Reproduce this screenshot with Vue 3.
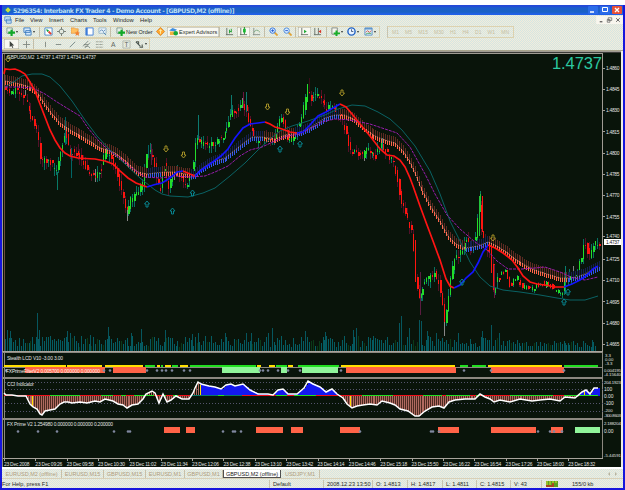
<script setup>
const menus = [
  { label: "File", w: 15 },
  { label: "View", w: 19 },
  { label: "Insert", w: 21 },
  { label: "Charts", w: 23 },
  { label: "Tools", w: 20 },
  { label: "Window", w: 27 },
  { label: "Help", w: 20 },
];

const tools = [
  { icon: "new", w: 17, drop: true },
  { icon: "windows", w: 18, drop: true },
  { sep: true, w: 3 },
  { icon: "market", w: 13 },
  { icon: "cross", w: 14 },
  { icon: "navigator", w: 14 },
  { icon: "terminal", w: 13 },
  { icon: "tester", w: 14 },
  { sep: true, w: 4 },
  { icon: "new", w: 40, label: "New Order" },
  { icon: "meta", w: 13 },
  { icon: "expert", w: 52, label: "Expert Advisors", on: true },
  { sep: true, w: 4 },
  { icon: "bars", w: 14 },
  { icon: "candles", w: 13, on: true },
  { icon: "line", w: 14 },
  { sep: true, w: 3 },
  { icon: "zoomin", w: 14 },
  { icon: "zoomout", w: 14 },
  { sep: true, w: 3 },
  { icon: "scroll", w: 13, on: true },
  { icon: "shift", w: 15 },
  { sep: true, w: 3 },
  { icon: "indicator", w: 16, drop: true },
  { icon: "clock", w: 17, drop: true },
  { icon: "template", w: 17, drop: true },
];
const periods = ["M1", "M5", "M15", "M30", "H1", "H4", "D1", "W1", "MN"];
const drawTools = [
  { icon: "cursor", w: 15, on: true },
  { icon: "crosshair", w: 14 },
  { sep: true, w: 5 },
  { icon: "vline", w: 13 },
  { icon: "hline", w: 14 },
  { icon: "trend", w: 14 },
  { icon: "channel", w: 13 },
  { icon: "fibo", w: 14 },
  { icon: "letter", w: 13 },
  { icon: "textbox", w: 13 },
  { icon: "arrows", w: 17, drop: true },
];

const tabs = [
  { label: "EURUSD,M2 (offline)", w: 60 },
  { label: "EURUSD,M15", w: 42 },
  { label: "GBPUSD,M15", w: 42 },
  { label: "EURUSD,M1", w: 39 },
  { label: "GBPUSD,M1", w: 38 },
  { label: "GBPUSD,M2 (offline)", w: 58, on: true },
  { label: "USDJPY,M1", w: 39 },
];
const cells = [
  { label: "For Help, press F1", w: 268 },
  { label: "Default", w: 54 },
  { label: "2008.12.23 13:50", w: 49 },
  { label: "O: 1.4813", w: 35 },
  { label: "H: 1.4817", w: 35 },
  { label: "L: 1.4811", w: 34 },
  { label: "C: 1.4815", w: 34 },
  { label: "V: 43", w: 31 },
];

// small deterministic generator, so the bars are the same on every load
let seed = 11;
const rnd = () => {
  seed = (seed * 16807) % 2147483647;
  return seed / 2147483647;
};

const parse = (s) => s.trim().split(/\s+/).map((p) => p.split(",").map(Number));
const at = (pts, x) => {
  for (let i = 1; i < pts.length; i++) {
    if (x <= pts[i][0]) {
      const [x0, y0] = pts[i - 1];
      const [x1, y1] = pts[i];
      return y0 + ((y1 - y0) * (x - x0)) / (x1 - x0 || 1);
    }
  }
  return pts[pts.length - 1][1];
};

const pricePath = parse(`5,90 12,92 20,91 26,98 30,112 35,127 38,130 41,160 45,160 50,162 57,172 60,155 64,140 66,128
  70,155 75,150 82,160 90,172 95,177 102,168 106,148 112,160 118,178 122,192 127,214 131,200 138,195 143,185 148,150
  153,155 158,185 161,190 164,160 168,190 173,172 178,170 183,180 188,183 193,170 197,138 201,143 208,145 216,143
  225,133 232,112 238,110 243,102 247,113 251,128 255,138 262,138 270,139 274,142 279,122 283,116 288,140 294,138
  299,128 303,112 308,88 312,100 315,92 320,97 326,108 333,108 340,112 345,128 350,148 355,153 362,156 368,150
  375,158 382,145 389,155 395,165 398,182 402,205 408,220 413,235 415,275 420,300 424,285 430,278 435,273 440,283
  443,305 445,325 448,305 450,280 455,260 462,250 467,240 472,252 477,235 480,202 482,230 486,248 491,250 494,290
  498,280 505,270 509,285 517,278 523,287 533,289 540,283 550,286 562,293 565,278 570,278 577,275 582,258 585,240
  590,258 594,245 598,242`);

const candles = [];
for (let x = 5; x < 599; x += 1.96) {
  const a = at(pricePath, x - 1) + (rnd() - 0.5) * 7;
  const b = at(pricePath, x + 1) + (rnd() - 0.5) * 7;
  const top = Math.min(a, b);
  const bottom = Math.max(a, b, top + 1.5);
  const calm = x > 498 && x < 560;
  const reach = calm ? 2 : 7;
  candles.push({
    x: Math.round(x),
    up: b < a,
    top,
    bottom,
    high: top - rnd() * reach,
    low: bottom + rnd() * reach,
    grey: rnd() > 0.95,
  });
}
const spikes = [
  [65, 117, 145, "#066"], [71, 148, 178, "#066"], [57, 172, 190, "#087a66"], [198, 115, 140, "#0c7a70"],
  [231, 95, 115, "#0c7a70"], [243, 92, 108, "#6a1440"], [246, 92, 112, "#0c7a70"], [309, 78, 92, "#3a0c18"],
  [127, 210, 221, "#888"], [148, 145, 158, "#066"], [480, 191, 210, "#0c7a60"], [420, 272, 315, "#5a1c40"],
  [444, 322, 336, "#888"], [382, 138, 152, "#0c7a70"], [494, 265, 298, "#6a1840"], [565, 266, 294, "#078070"],
  [151, 144, 165, "#5a1c40"], [491, 247, 273, "#ff1510"], [482, 196, 232, "#ff1510"], [479, 196, 236, "#22c53a"],
  [480, 194, 212, "#22c53a"], [66, 126, 138, "#ff1510"], [307, 84, 102, "#22dd2a"], [415, 240, 282, "#ff1510"],
];

const volPeaks = parse(`7,331 10,332 37,314 39,331 42,338 67,332 70,334 90,336 108,328 131,334 141,330 150,340
  165,331 192,335 198,334 225,334 246,334 251,334 268,334 272,329 305,332 325,333 353,331 356,329 399,324 401,317
  409,329 419,321 421,322 427,332 436,334 458,334 482,332 491,326 499,334 565,344 583,344 592,341`);
const volumes = [];
for (let x = 5; x < 596; x += 1.96) {
  const quiet = x > 500 ? 0.6 : 1;
  volumes.push({ x: Math.round(x), y: 351 - (4 + rnd() * 11 * quiet), dim: rnd() > 0.85 });
}

const fast = [
  ["#ff1414", "4,74 5,69 10,69.5 15,69 20,71 25,74 30,82 35,91 40,104 45,117 50,130 55,140 60,148 65,153 70,156 78,158 85,158.5 95,159 105,161 113,164 120,171 128,178 136,183 147,187"],
  ["#1414ff", "147,187 155,184.5 162,183 170,178 177,172 183,171"],
  ["#ff1414", "183,171 190,174 195,176"],
  ["#1414ff", "195,176 200,171 210,164 221,156 228,149 235,138 243,128 250,124 258,123 265,122"],
  ["#ff1414", "265,122 270,124 275,127 282,129 290,132 297,133"],
  ["#1414ff", "297,133 303,132 310,125 318,116 326,112 333,108 340,104"],
  ["#ff1414", "340,104 346,107 352,114 360,124 370,136 380,149 387,155 394,156 400,160 405,167 410,178 413,186 420,206 427,225 433,241 440,260 446,279 450,286 454,288"],
  ["#1414ff", "454,288 460,285 466,278 473,272 478,263 483,252 488,245"],
  ["#ff1414", "488,245 495,248 503,253 512,260 518,268 523,276 530,282 537,284 545,285 555,287 564,287"],
  ["#1414ff", "564,287 572,284 580,280 587,275 593,269 598,266"],
];
const slow = "5,87 10,84 15,81 22,76 32,74 42,74 50,77 60,86 72,101 85,120 97,136 110,150 125,164 140,178 155,190 162,194 170,196 188,197 203,193 215,188 230,176 245,163 258,150 270,139 280,131 292,126 308,121 325,115 338,109 352,105 365,106 378,112 390,119 402,130 415,146 430,171 440,194 450,221 460,241 470,262 480,277 490,286 503,290 520,292 540,295 557,298 570,300 585,300 598,296";
const dashed = "5,87 20,87 33,88 45,94 57,102 70,110 80,116 88,128 98,140 108,150 120,158 133,169 145,177 160,178 175,176 190,177 205,176 215,172 228,166 240,156 250,150 262,147 275,141 287,136 300,134 312,128 322,122 335,119 350,120 370,124 385,129 397,133 410,147 425,174 435,194 447,215 460,229 475,242 487,250 497,261 508,269 522,269 535,268 545,267 560,272 573,278 585,280 598,277";

const bandPath = parse(`5,81 12,82 20,84 30,87 37,92 45,104 52,114 60,123 67,128 77,134 90,141 100,148 108,150 115,153
  123,159 130,165 138,172 147,174 155,173 165,172 175,172 185,174 195,175 200,170 210,163 225,158 235,150 245,142
  252,137 262,137 275,139 285,135 297,133 308,129 316,124 325,118 335,115 345,115 355,120 365,129 375,136 385,140
  395,143 403,151 410,162 415,173 420,186 430,205 440,221 448,236 456,244 466,248 478,246 488,242 495,245 505,251
  515,259 525,265 535,270 547,274 560,278 568,278 577,277 585,274 598,267`);
const isBlue = (x) => (x > 147 && x < 160) || (x > 190 && x < 262) || (x > 295 && x < 340) || (x > 464 && x < 488) || x > 566;
const band = [];
for (let x = 5; x < 599; x += 1.96) {
  const y = at(bandPath, x);
  const blue = isBlue(x);
  band.push({ x: Math.round(x), y, bright: blue ? "#3557e8" : "#ff6347", dark: blue ? "#16204e" : "#5c2a22" });
}
const bandLine = bandPath.map((p) => p.join(",")).join(" ");

const signals = [
  [8, 59, 1], [166, 149, 1], [183.5, 155, 1], [267.5, 107, 1], [287.5, 112, 1], [342, 93, 1], [493, 238, 1],
  [147, 204, 0], [172.5, 211, 0], [192.5, 193, 0], [280, 149, 0], [300, 144, 0], [462, 282, 0], [564, 302, 0], [568, 292, 0],
];
const prices = Array.from({ length: 14 }, (_, i) => ({
  text: (1.486 - i * 0.0015).toFixed(4),
  y: 68 + i * 21.25 - (i === 8 ? 1.5 : 0), // 1.4740 gives way to the current price tag
}));

const lcd = [
  ["#ffe000", 4, 66], ["#ffe000", 67, 102], ["#ffe000", 105, 143], ["#20e020", 145, 155], ["#ffe000", 157, 160],
  ["#20e020", 161, 163], ["#ffe000", 165, 171], ["#20e020", 172, 178], ["#ffe000", 180, 188], ["#20e020", 190, 256],
  ["#ffe000", 257, 261], ["#ffe000", 269, 275], ["#20e020", 276, 287], ["#ffe000", 288, 293], ["#20e020", 298, 339],
  ["#ffe000", 341, 455], ["#20e020", 460, 468], ["#20e020", 472, 486], ["#ffe000", 488, 562], ["#20e020", 564, 598],
];
const filterBoxes = [
  ["#ff6347", 25, 105], ["#ff6347", 113, 146], ["#90f59a", 222, 260], ["#90f59a", 281, 287],
  ["#90f59a", 302, 338], ["#ff6347", 346, 456], ["#ff6347", 491, 564],
];
const filterDots = [6, 104, 110, 147, 157, 162, 166, 172, 184, 190, 260, 263, 268, 278, 288, 300, 341, 464, 491, 564];

const cci = parse(`4,393 6,395 12,395 18,396 26,396 30,404 33,407 37,409 40,414 42,415 45,411 50,410 55,409 60,404
  64,402 68,402 72,403 80,402 87,403 95,401 100,402 105,399 113,401 118,404 123,405 127,408 132,405 138,404 143,399
  146,394 152,391 155,393 159,403 163,394 167,402 171,400 176,396 182,399 189,399 193,393 195,388 198,382 201,384
  209,386 215,387 221,389 226,385 231,384 235,386 243,384 250,390 258,394 268,394 273,395 278,390 283,389 288,394
  297,394 304,388 308,381 313,384 320,387 326,392 332,389 337,394 343,398 347,404 352,408 357,406 363,405 370,404
  377,405 382,401 390,403 395,405 400,409 408,411 415,416 419,416 425,411 432,407 439,406 444,408 449,402 455,400
  465,399 475,399 480,394 485,397 490,399 494,402 500,400 510,402 520,399 532,401 540,400 550,399 560,401 565,397
  575,398 582,392 586,390 590,394 594,388 598,388`);
const cciLine = cci.map((p) => p.join(",")).join(" ");
const cciBelow = "4,395.5 " + cci.map(([x, y]) => `${x},${Math.max(y, 395.5)}`).join(" ") + " 598,395.5";
const cciBars = [];
for (let x = 6; x < 599; x += 1.96) {
  const y = at(cci, x);
  cciBars.push({ x: Math.round(x), y: Math.min(y, 395.5), h: Math.abs(y - 395.5), up: y < 395.5 && x > 200 });
}
const cciBase = [
  ["#20e020", 50, 80], ["#20e020", 101, 113], ["#20e020", 121, 126], ["#20e020", 134, 154], ["#20e020", 162, 166],
  ["#20e020", 173, 178], ["#087868", 190, 242], ["#20e020", 218, 224], ["#20e020", 276, 287], ["#20e020", 294, 316],
  ["#20e020", 362, 393], ["#20e020", 423, 442], ["#20e020", 446, 470], ["#20e020", 476, 480], ["#20e020", 510, 553], ["#20e020", 564, 598],
];

const primeBoxes = [
  ["#ff6347", 164, 180], ["#ff6347", 186, 195], ["#ff6347", 256, 283], ["#ff6347", 291, 303], ["#ff6347", 340, 360],
  ["#ff6347", 438, 459], ["#ff6347", 491, 536], ["#ff6347", 551, 563], ["#90f59a", 575, 600],
];
const primeDots = [18, 38, 57, 114, 128, 130, 223, 233, 235, 241, 360, 431, 433, 439, 538, 550, 554, 562];
const times = ["2008", "09:26", "09:58", "10:30", "11:02", "11:34", "12:06", "12:38", "13:10", "13:42", "14:14", "14:46", "15:18", "15:50", "16:22", "16:54", "17:26", "18:00", "18:32"];
</script>

<template>
  <div class="window">
    <svg class="defs" width="0" height="0">
      <symbol id="new" viewBox="0 0 10 10"><path d="M1 1h6v6H1z" fill="#e8efe8" stroke="#6a8a80" stroke-width=".8" /><path d="M5 3h2.400v2H10v2.400H7.400V10H5V7.400H2.500V5H5z" fill="#12a828" /></symbol>
      <symbol id="windows" viewBox="0 0 10 10"><path d="M1 1h7v5H1zM3 4h6v5H3z" fill="#d6ebff" stroke="#3d7cc0" /></symbol>
      <symbol id="market" viewBox="0 0 10 10"><path d="M1 1h8v8H1z" fill="#fff" stroke="#4a88c8" /><path d="M3 3l2 1-1 1z" fill="#00a030" stroke="#00a030" /><path d="M5 5l3 3" stroke="#e04030" stroke-width="2" /></symbol>
      <symbol id="cross" viewBox="0 0 10 10"><circle cx="5" cy="5" r="2.600" fill="none" stroke="#808880" /><path d="M5 0v3M5 7v3M0 5h3M7 5h3" stroke="#707870" /></symbol>
      <symbol id="navigator" viewBox="0 0 10 10"><path d="M0 1h4l1 1h3v5H0z" fill="#ffc060" stroke="#e09038" stroke-width=".7" /><path d="M7 4l1 2h2L8.500 7.500 9 10 7 8.500 5 10l.5-2.500L4 6h2z" fill="#f08030" /></symbol>
      <symbol id="terminal" viewBox="0 0 10 10"><path d="M1 1h8v8H1z" fill="#fff" stroke="#3d7cd8" /><path d="M2 1v8" stroke="#3d7cd8" stroke-width="2" /></symbol>
      <symbol id="tester" viewBox="0 0 10 10"><path d="M1 1h8v6H1z" fill="#eaf3fa" stroke="#98b8c8" /><path d="M2 5l2-2 2 2 2-2M6 6l3 3" fill="none" stroke="#5080b0" /></symbol>
      <symbol id="meta" viewBox="0 0 10 10"><path d="M5 .5L9.500 5 5 9.500.5 5z" fill="#ffa830" stroke="#e08828" /><path d="M5 2.500v5M3.500 4h3" stroke="#fff0b0" /></symbol>
      <symbol id="expert" viewBox="0 0 10 10"><path d="M0 4l4-3 5 2-3 2z" fill="#3f8fe0" /><path d="M1 5h5v4H1z" fill="#f2b040" /><circle cx="7.500" cy="7" r="2.500" fill="#18a838" /></symbol>
      <symbol id="bars" viewBox="0 0 10 10"><path d="M2 1v8M1 8.500h8" stroke="#687068" /><path d="M5 3v4M7 2v4M5 5h2" stroke="#20a030" /></symbol>
      <symbol id="candles" viewBox="0 0 10 10"><path d="M2 1v8M1 8.500h8" stroke="#687068" /><path d="M6 0v8" stroke="#108820" /><path d="M4.500 2h3v4h-3z" fill="#18b830" /></symbol>
      <symbol id="line" viewBox="0 0 10 10"><path d="M2 1v8M1 8.500h8" stroke="#889088" /><path d="M2 6q3-5 7 0" fill="none" stroke="#80a880" /></symbol>
      <symbol id="zoomin" viewBox="0 0 10 10"><path d="M6 6l3.500 3.500" stroke="#e0a030" stroke-width="1.800" /><circle cx="4" cy="4" r="3" fill="#d8ebff" stroke="#3070d8" /><path d="M2.500 4h3M4 2.500v3" stroke="#2058d0" /></symbol>
      <symbol id="zoomout" viewBox="0 0 10 10"><path d="M6 6l3.500 3.500" stroke="#e0a030" stroke-width="1.800" /><circle cx="4" cy="4" r="3" fill="#d8ebff" stroke="#4888d8" /><path d="M2.500 4h3" stroke="#2058d0" /></symbol>
      <symbol id="scroll" viewBox="0 0 10 10"><path d="M2 1v8M1 8.500h8" stroke="#687068" /><path d="M4.500 3l3 2-3 2z" fill="#18a830" /></symbol>
      <symbol id="shift" viewBox="0 0 10 10"><path d="M2 1v8M1 8.500h8M6 1v7" stroke="#687068" /><path d="M9 3L6 5l3 2z" fill="#d83828" /></symbol>
      <symbol id="indicator" viewBox="0 0 10 10"><path d="M1 1h6v7H1z" fill="#f4f4ee" stroke="#808880" /><path d="M5 4h2.200v2H10v2H7.200v2H5V8H3V6h2z" fill="#18b028" /></symbol>
      <symbol id="clock" viewBox="0 0 10 10"><circle cx="5" cy="5" r="4" fill="#e8f2ff" stroke="#2464c4" stroke-width="1.600" /><path d="M5 2.500V5h2" fill="none" stroke="#405880" /></symbol>
      <symbol id="template" viewBox="0 0 10 10"><path d="M1 1h8v8H1z" fill="#e4f0fa" stroke="#5890c8" /><path d="M1 2h8" stroke="#5890c8" stroke-width="1.500" /><path d="M2 6l2-2 2 2 2-2" fill="none" stroke="#d05040" /><path d="M2 8l2-1 4 0" fill="none" stroke="#40a050" /></symbol>
      <symbol id="cursor" viewBox="0 0 10 10"><path d="M3 1v7l1.700-1.500L6 9l1-.6-1.200-2.300H8z" fill="#404440" /></symbol>
      <symbol id="crosshair" viewBox="0 0 10 10"><path d="M5 1v8M1 5h8" stroke="#808880" /></symbol>
      <symbol id="vline" viewBox="0 0 10 10"><path d="M5 2v6" stroke="#808880" /></symbol>
      <symbol id="hline" viewBox="0 0 10 10"><path d="M2 5h6" stroke="#808880" /></symbol>
      <symbol id="trend" viewBox="0 0 10 10"><path d="M2 8l6-6" stroke="#808880" /></symbol>
      <symbol id="channel" viewBox="0 0 10 10"><path d="M1 7l6-6M3 9l6-6M2 5h5M3 7h4M7 7l2 2" stroke="#707870" stroke-width=".8" /></symbol>
      <symbol id="fibo" viewBox="0 0 10 10"><path d="M1 2h8M1 5h8M1 8h8" stroke="#888c80" stroke-dasharray="1 .5" /></symbol>
      <symbol id="letter" viewBox="0 0 10 10"><text x="2.200" y="8" font-size="7.500" fill="#606860">A</text></symbol>
      <symbol id="textbox" viewBox="0 0 10 10"><path d="M1 1h8v8H1z" fill="none" stroke="#a0a498" stroke-width=".7" /><text x="2.700" y="7.800" font-size="7" fill="#606860">T</text></symbol>
      <symbol id="arrows" viewBox="0 0 10 10"><path d="M1 2l3 0 0 3M1 2l5 5M5 8h4M8 5v3" fill="none" stroke="#505850" stroke-width="1.200" /></symbol>
    </svg>

    <header class="title">
      <svg class="app-icon" viewBox="0 0 8 8"><path d="M1 4l3-3 3 3-3 3z" fill="#c8dc40" stroke="#3890a0" /></svg>
      <span class="title-text">5296354: Interbank FX Trader 4 - Demo Account - [GBPUSD,M2 (offline)]</span>
      <div class="caption">
        <i><svg viewBox="0 0 10 8"><path d="M2 6h4" stroke="#fff" stroke-width="1.500" /></svg></i>
        <i><svg viewBox="0 0 10 8"><path d="M2.500 1.500h5v4h-5z" fill="none" stroke="#fff" /></svg></i>
        <i class="close"><svg viewBox="0 0 10 8"><path d="M3 2l4 4M7 2L3 6" stroke="#fff" stroke-width="1.300" /></svg></i>
      </div>
    </header>

    <nav class="menu">
      <svg class="doc-icon"><use href="#windows" /></svg>
      <span v-for="m in menus" :key="m.label" :style="{ width: m.w + 'px' }">{{ m.label }}</span>
      <svg class="mdi" viewBox="0 0 30 9"><path d="M0 0h30v9H0z" fill="#f8f6ee" /><path d="M4 6.500h3" stroke="#404040" stroke-width="1.200" /><path d="M13.500 2h4v3h-4zM12.500 4h3v3h-3z" fill="none" stroke="#606060" stroke-width=".8" /><path d="M22.500 2.500l4 4M26.500 2.500l-4 4" stroke="#505050" /></svg>
    </nav>

    <div class="toolbar">
      <div class="group">
        <div v-for="(t, i) in tools" :key="i" class="tool" :class="{ on: t.on, sep: t.sep }" :style="{ width: t.w + 'px' }">
          <svg v-if="t.icon" class="icon"><use :href="'#' + t.icon" /></svg>
          <span v-if="t.label" class="tool-label">{{ t.label }}</span>
          <b v-if="t.drop"></b>
        </div>
      </div>
      <div class="group periods">
        <span v-for="p in periods" :key="p">{{ p }}</span>
      </div>
    </div>
    <div class="toolbar draw">
      <div class="group">
        <div v-for="(t, i) in drawTools" :key="i" class="tool" :class="{ on: t.on, sep: t.sep }" :style="{ width: t.w + 'px' }">
          <svg v-if="t.icon" class="icon"><use :href="'#' + t.icon" /></svg>
          <b v-if="t.drop"></b>
        </div>
      </div>
    </div>

    <div class="chart">
      <!-- price panel -->
      <svg class="panel" viewBox="2 51 619 301" width="619" height="301" shape-rendering="crispEdges">
        <path d="M2 51.500h619M2 53.500h601M2.500 51v301M602.500 53v299" stroke="#a09c94" />
        <path d="M2 52.500h619" stroke="#3c3c38" />
        <path d="M4.500 54v298" stroke="#6c4c40" />
        <g>
          <rect v-for="(v, i) in volumes" :key="i" :x="v.x" :y="v.y" width="1" :height="351 - v.y" :fill="v.dim ? '#0a3a18' : '#045c62'" />
          <rect v-for="(v, i) in volPeaks" :key="'p' + i" :x="v[0]" :y="v[1] - 1" width="1" :height="352 - v[1]" fill="#06565e" />
        </g>
        <g v-for="(c, i) in candles" :key="'c' + i">
          <rect :x="c.x" :y="c.high" width="1" :height="c.low - c.high" :fill="c.grey ? '#808080' : c.up ? '#087060' : '#521028'" />
          <rect :x="c.x" :y="c.top" :width="i % 3 === 0 ? 2 : 1" :height="c.bottom - c.top" :fill="c.up ? '#22dd2a' : '#ff1510'" />
        </g>
        <rect v-for="(s, i) in spikes" :key="'s' + i" :x="s[0]" :y="s[1]" width="1" :height="s[2] - s[1]" :fill="s[3]" />
        <g v-for="(b, i) in band" :key="'b' + i">
          <rect :x="b.x" :y="b.y - 6" width="1" height="7" :fill="b.dark" />
          <rect :x="b.x" :y="b.y" width="1" height="4" :fill="b.bright" />
        </g>
        <g fill="none" shape-rendering="auto">
          <polyline :points="bandLine" stroke="#e8a090" stroke-width=".6" stroke-dasharray="1.500 1" />
          <polyline :points="slow" stroke="#0a6264" />
          <polyline :points="dashed" stroke="#981cac" stroke-dasharray="3 1" />
          <polyline v-for="(f, i) in fast" :key="i" :points="f[1]" :stroke="f[0]" stroke-width="1.700" />
          <path
            v-for="(s, i) in signals" :key="'a' + i"
            :d="s[2] ? 'M-1 -3h2v3h1.500L0 3L-2.500 0H-1z' : 'M-1 3h2v-3h1.500L0 -3L-2.500 0H-1z'"
            :transform="`translate(${s[0]} ${s[1]})`"
            :stroke="s[2] ? '#b09a28' : '#088c98'" stroke-width=".9"
          />
        </g>
        <text x="7" y="59" class="tiny" textLength="89">GBPUSD,M2&#160; 1.4737 1.4737 1.4734 1.4737</text>
        <text x="552" y="69" class="quote" textLength="50">1.4737</text>
        <g v-for="p in prices" :key="p.text">
          <path :d="`M603 ${p.y}h2`" stroke="#a09c94" />
          <text x="606" :y="p.y + 1.800" class="tiny" textLength="13.500">{{ p.text }}</text>
        </g>
        <rect x="604" y="239" width="17" height="6" fill="#fff" />
        <text x="606" y="243.900" class="tiny now" textLength="13.500">1.4737</text>
        <path d="M2 351.500h601" stroke="#a8a49c" />
      </svg>

      <!-- LCD and filter panel -->
      <svg class="panel" viewBox="2 352 619 27" width="619" height="27" shape-rendering="crispEdges">
        <path d="M2.500 352v27M4.500 353v26M602.500 352v27" stroke="#8c8880" />
        <path d="M3 352.500h600M3 367h600M3 377.500h600M3 378.500h600" stroke="#8c8880" />
        <path v-for="(l, i) in lcd" :key="i" :d="`M${l[1]} 365.500H${l[2]}`" :stroke="l[0]" stroke-width="2" />
        <rect v-for="(f, i) in filterBoxes" :key="'f' + i" :x="f[1]" y="367" :width="f[2] - f[1]" height="6" :fill="f[0]" />
        <circle v-for="d in filterDots" :key="'d' + d" :cx="d" cy="370.500" r="1.300" class="dot" />
        <text x="7" y="360" class="tiny" textLength="56">Stealth LCD V10 -3.00 3.00</text>
        <text x="6" y="373.300" class="tiny over" textLength="94">FXPrimeFilterV2 0.005700 0.000000 0.000000</text>
        <text x="605" y="356.800" class="tiny small">3.3</text>
        <text x="605" y="361" class="tiny small">0.00</text>
        <text x="605" y="365.200" class="tiny small">-3.3</text>
        <text x="604" y="371.500" class="tiny small" textLength="17">0.004195</text>
        <text x="604" y="376.200" class="tiny small" textLength="17">-4.15640</text>
      </svg>

      <!-- CCI panel -->
      <svg class="panel" viewBox="2 379 619 41" width="619" height="41" shape-rendering="crispEdges">
        <path d="M2.500 379v41M4.500 379v39M602.500 379v41" stroke="#8c8880" />
        <path d="M5 382.500h598M5 389.500h598M5 403.500h598M5 411.500h598" stroke="#54546c" stroke-dasharray="1 2" />
        <polygon :points="cciBelow" fill="#4a2a20" />
        <rect v-for="(b, i) in cciBars" :key="i" :x="b.x" :y="b.y" :width="b.up ? 2 : 1" :height="b.h" :fill="b.up ? '#1418f0' : '#b06a60'" />
        <path d="M32.500 396v11M200.500 385v10M350.500 396v11M584.500 390v5" stroke="#ffe000" />
        <path d="M4 395.500h594" stroke="#f01018" stroke-width="1.500" />
        <path v-for="(b, i) in cciBase" :key="'g' + i" :d="`M${b[1]} 395.500H${b[2]}`" :stroke="b[0]" stroke-width="1.500" />
        <polyline :points="cciLine" fill="none" stroke="#fff" stroke-width="1.500" shape-rendering="auto" />
        <text x="7" y="385.500" class="tiny" textLength="27">CCI Indicator</text>
        <text x="604" y="384" class="tiny small" textLength="17">204.1923</text>
        <text x="604" y="390.500" class="tiny">100</text>
        <text x="604" y="397.500" class="tiny">0.00</text>
        <text x="604" y="405" class="tiny">-100</text>
        <text x="604" y="411.800" class="tiny small">-200</text>
        <text x="604" y="416.800" class="tiny small" textLength="17">-300.8603</text>
        <path d="M3 418.500h600M3 419.500h600" stroke="#8c8880" />
      </svg>

      <!-- FX Prime panel and time axis -->
      <svg class="panel" viewBox="2 420 619 47" width="619" height="47" shape-rendering="crispEdges">
        <path d="M2.500 420v47M4.500 420v38M602.500 420v39" stroke="#8c8880" />
        <path d="M3 458.500h600" stroke="#a8a49c" />
        <rect v-for="(p, i) in primeBoxes" :key="i" :x="p[1]" y="427" :width="p[2] - p[1]" height="6" :fill="p[0]" />
        <circle v-for="d in primeDots" :key="'d' + d" :cx="d" cy="431.500" r="1.300" class="dot" />
        <text x="7" y="425.800" class="tiny" textLength="106">FX Prime V2 1.254980 0.000000 0.000000 0.200000</text>
        <text x="604" y="424.800" class="tiny small" textLength="17">2.188204</text>
        <text x="604" y="432.500" class="tiny">0.00</text>
        <text x="604" y="457" class="tiny small" textLength="17">-5.44591</text>
        <g v-for="(t, i) in times" :key="t">
          <path :d="`M${4.500 + i * 31.35} 459v2`" stroke="#a8a49c" />
          <text :x="4 + i * 31.35" y="465.500" class="tiny" :textLength="i ? 27 : 25.500">23 Dec {{ t }}</text>
        </g>
      </svg>
    </div>

    <div class="tabs">
      <div v-for="t in tabs" :key="t.label" class="tab" :class="{ on: t.on }" :style="{ width: t.w + 'px' }">{{ t.label }}</div>
      <div class="tab-nav"><i></i><i class="right"></i></div>
    </div>

    <footer class="status">
      <div v-for="c in cells" :key="c.label" class="cell" :style="{ width: c.w + 'px' }">{{ c.label }}</div>
      <svg class="signal" viewBox="0 0 12 6"><path d="M0 0h12v6H0z" fill="#58a020" /><path d="M1 0v4M4 0v4M7 0v3M10 0v2" stroke="#d8e030" /><path d="M0 5h8M6 3h2" stroke="#c02820" stroke-width="1.500" /></svg>
      <div class="traffic">155/0 kb</div>
    </footer>
  </div>
</template>

<style>
body {
  margin: 0;
  background: #fff;
}
</style>

<style scoped>
.window {
  box-sizing: border-box;
  width: 625px;
  height: 490px;
  padding-top: 5px;
  border: solid #1717d8;
  border-width: 0 2px 2px;
  border-image: linear-gradient(#fff 5px, #1616dc 5px) 0 2 2;
  display: flex;
  flex-direction: column;
  overflow: hidden;
  font-family: "Liberation Sans", Arial, sans-serif;
  font-size: 5.8px;
  color: #282c28;
  background: #fff;
}
.defs { display: none; }
.title {
  height: 10px;
  flex: none;
  display: flex;
  align-items: center;
  padding-left: 2px;
  background: linear-gradient(#2448d8 0 1px, #1c5ecc 3px, #1a62c4 7px, #2060e8 9px);
}
.app-icon { width: 8px; height: 8px; }
.title-text {
  margin-left: 1px;
  color: #b8dcf4;
  font-family: "DejaVu Sans", sans-serif;
  font-size: 6.2px;
  font-weight: bold;
  white-space: nowrap;
  letter-spacing: -0.46px;
}
.caption { margin-left: auto; display: flex; gap: 2px; padding-right: 1px; }
.caption i { width: 10px; height: 8px; background: #2c6ce8; border-radius: 1px; display: block; }
.caption svg { display: block; width: 10px; height: 8px; }
.caption .close { background: #e85038; }
.menu, .toolbar, .tabs, .status {
  background: repeating-conic-gradient(#d4e6e2 0 25%, #f2ecdc 0 50%) 0 0 / 2px 2px;
}
.menu {
  height: 10px;
  flex: none;
  display: flex;
  align-items: center;
  padding-left: 2px;
  font-size: 5.8px;
}
.menu span { white-space: nowrap; }
.doc-icon { width: 8px; height: 8px; margin-right: 3px; }
.mdi { width: 27px; height: 8px; margin-left: auto; }
.toolbar {
  height: 13px;
  flex: none;
  display: flex;
  align-items: center;
  gap: 7px;
}
.draw { border-bottom: 1px solid #a8a48c; height: 13px; box-sizing: border-box; }
.group {
  display: flex;
  align-items: center;
  box-sizing: border-box;
  height: 12px;
  padding-left: 2px;
  border: 1px solid #dcd2b0;
  border-left: 0;
}
.tool {
  height: 10px;
  flex: none;
  box-sizing: border-box;
  display: flex;
  align-items: center;
  padding-left: 2px;
}
.draw .tool { padding-left: 3px; }
.tool.on { background: #f8f8f2; box-shadow: inset 0 0 0 0.5px #a8a898; }
.toolbar .tool.sep { padding: 0; border-left: 1px solid #c4bea8; }
.icon { width: 9px; height: 9px; flex: none; }
.tool-label { font-size: 5.5px; white-space: nowrap; margin-left: 1px; }
.tool b {
  border: 1.5px solid transparent;
  border-top: 2px solid #303430;
  border-bottom: 0;
  margin-left: 1px;
}
.periods { width: 127px; padding: 0 4px; justify-content: space-between; font-size: 5px; color: #c8c0a0; border-left: 1px solid #c8c4b0; }
.chart {
  height: 416px;
  flex: none;
  background: #09140a;
  border-right: 2px solid #f0eee4;
  overflow: hidden;
}
.panel { display: block; }
.tiny { font-size: 4.9px; fill: #e0e2e0; }
.small { font-size: 4.3px; }
.over { fill: #f8f4f0; }
.now { fill: #101010; }
.quote { font-size: 16.5px; fill: #2cc8a0; }
.dot { fill: #8088a0; shape-rendering: auto; }
.tabs {
  height: 11px;
  flex: none;
  box-sizing: border-box;
  display: flex;
  align-items: flex-start;
  padding-top: 1px;
  border-top: 2px solid #fff;
  font-size: 5.5px;
  color: #b09c7c;
}
.tab {
  flex: none;
  box-sizing: border-box;
  height: 8px;
  line-height: 8px;
  text-align: center;
  white-space: nowrap;
  border-right: 1px solid #c8c0a8;
}
.tab.on { background: #fff; color: #202020; border: 1px solid #505050; border-top: 0; }
.tab-nav { margin-left: auto; display: flex; gap: 5px; padding: 2px 6px 0 0; }
.tab-nav i { border: 2px solid transparent; border-right-color: #b8b4a0; border-left: 0; }
.tab-nav .right { border-right: 0; border-left: 2px solid #b8b4a0; }
.status {
  flex: 1;
  display: flex;
  align-items: center;
  border-top: 1px solid #d8d0b8;
  font-size: 5.6px;
}
.cell {
  flex: none;
  box-sizing: border-box;
  height: 8px;
  line-height: 8px;
  border-right: 1px solid #c8c4b0;
  white-space: nowrap;
  padding-left: 3px;
}
.cell:first-child { padding-left: 0; }
.signal { width: 12px; height: 6px; margin-left: 4px; }
.traffic { margin-left: 14px; }
</style>
